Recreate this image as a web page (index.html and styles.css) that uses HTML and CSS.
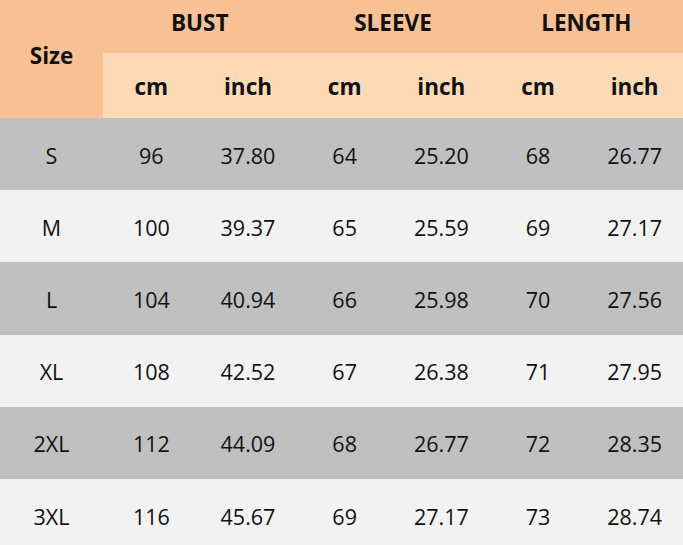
FILE: index.html
```html
<!DOCTYPE html>
<html>
<head>
<meta charset="utf-8">
<link rel="stylesheet" href="styles.css">
</head>
<body>
<div class="chart">
  <div class="cell size-head">Size</div>
  <div class="cell group span2">BUST</div>
  <div class="cell group span2">SLEEVE</div>
  <div class="cell group span2">LENGTH</div>
  <div class="cell unit">cm</div><div class="cell unit">inch</div>
  <div class="cell unit">cm</div><div class="cell unit">inch</div>
  <div class="cell unit">cm</div><div class="cell unit">inch</div>

  <div class="cell d g">S</div><div class="cell d g">96</div><div class="cell d g">37.80</div><div class="cell d g">64</div><div class="cell d g">25.20</div><div class="cell d g">68</div><div class="cell d g">26.77</div>
  <div class="cell d l">M</div><div class="cell d l">100</div><div class="cell d l">39.37</div><div class="cell d l">65</div><div class="cell d l">25.59</div><div class="cell d l">69</div><div class="cell d l">27.17</div>
  <div class="cell d g">L</div><div class="cell d g">104</div><div class="cell d g">40.94</div><div class="cell d g">66</div><div class="cell d g">25.98</div><div class="cell d g">70</div><div class="cell d g">27.56</div>
  <div class="cell d l">XL</div><div class="cell d l">108</div><div class="cell d l">42.52</div><div class="cell d l">67</div><div class="cell d l">26.38</div><div class="cell d l">71</div><div class="cell d l">27.95</div>
  <div class="cell d g">2XL</div><div class="cell d g">112</div><div class="cell d g">44.09</div><div class="cell d g">68</div><div class="cell d g">26.77</div><div class="cell d g">72</div><div class="cell d g">28.35</div>
  <div class="cell d l">3XL</div><div class="cell d l">116</div><div class="cell d l">45.67</div><div class="cell d l">69</div><div class="cell d l">27.17</div><div class="cell d l">73</div><div class="cell d l">28.74</div>
</div>
</body>
</html>
```
FILE: styles.css
```css
html, body {
  margin: 0;
  padding: 0;
  overflow: hidden;
  background: #f2f2f2;
}
.chart {
  width: 683px;
  display: grid;
  grid-template-columns: 103px repeat(6, 1fr);
  grid-template-rows: 53px 65px repeat(6, 72.2px);
  font-family: "Open Sans", "Noto Sans", sans-serif;
  font-size: 22.5px;
  color: #111;
}
.cell {
  display: flex;
  align-items: center;
  justify-content: center;
}
.size-head {
  grid-row: span 2;
  background: #f8c193;
  font-weight: 700;
  padding-bottom: 8px;
}
.group {
  background: #f8c193;
  font-weight: 700;
  padding-bottom: 9px;
}
.span2 { grid-column: span 2; }
.unit {
  background: #fdd9b6;
  font-weight: 700;
  padding-top: 2px;
}
.d { padding-top: 2px; font-size: 21.5px; }
.g { background: #c0c0c0; }
.l { background: #f2f2f2; }
```
